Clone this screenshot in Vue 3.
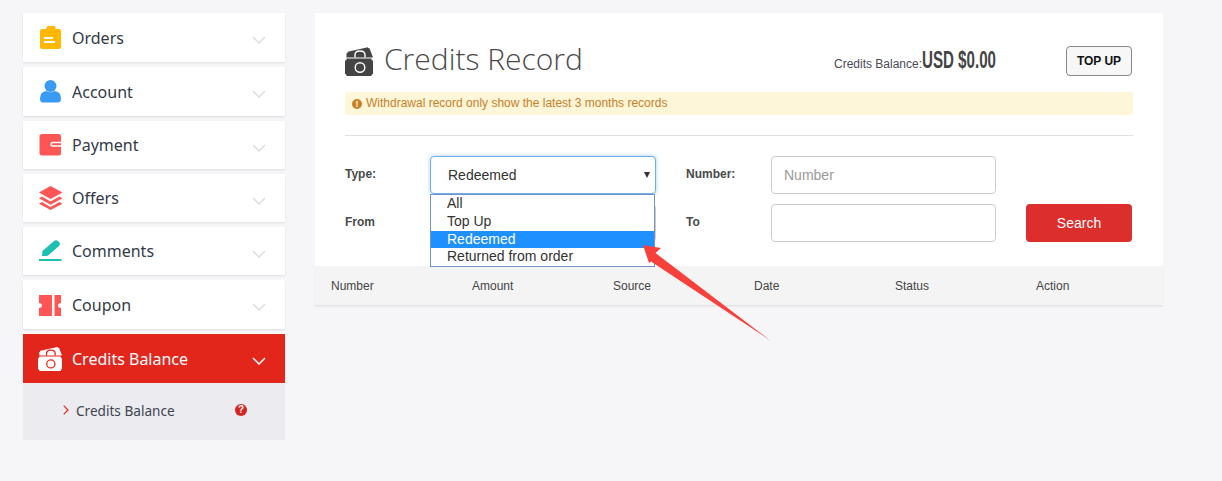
<script setup>
const items = [
  { label: 'Orders', h: 49, icon: 'orders' },
  { label: 'Account', h: 49, icon: 'account' },
  { label: 'Payment', h: 48, icon: 'payment' },
  { label: 'Offers', h: 48, icon: 'offers' },
  { label: 'Comments', h: 48, icon: 'comments' },
  { label: 'Coupon', h: 49, icon: 'coupon' },
]
const cols = ['Number', 'Amount', 'Source', 'Date', 'Status', 'Action']
const options = ['All', 'Top Up', 'Redeemed', 'Returned from order']
</script>

<template>
  <div class="page">
    <aside class="side">
      <div v-for="it in items" :key="it.label" class="item" :style="{ height: it.h + 'px' }">
        <span class="ico">
          <svg v-if="it.icon === 'orders'" width="24" height="24" viewBox="0 0 24 24"><path fill="#ffb800" d="M3 3h4.500V1.500Q7.500 0 9 0h6q1.500 0 1.500 1.500V3H20q2 0 2 2v16q0 2-2 2H3q-2 0-2-2V5q0-2 2-2z"/><rect x="5" y="11" width="9" height="2" fill="#fff"/><rect x="5" y="15" width="11" height="2" fill="#fff"/></svg>
          <svg v-else-if="it.icon === 'account'" width="24" height="24" viewBox="0 0 24 24"><circle cx="11.500" cy="6" r="6" fill="#3a9bf5"/><path fill="#3a9bf5" d="M1 18.500q0-7 6.500-7.500 4 2.500 8 0Q22 11.500 22 18.500q0 4-3 4H4q-3 0-3-4z"/></svg>
          <svg v-else-if="it.icon === 'payment'" width="24" height="24" viewBox="0 0 24 24"><rect x="0.500" y="1" width="21.500" height="21.500" rx="2.500" fill="#ff5555"/><path fill="none" stroke="#fff" stroke-width="1.500" d="M22 9.500h-8q-2 0-2 1.750T14 13h8"/></svg>
          <svg v-else-if="it.icon === 'offers'" width="24" height="24" viewBox="0 0 24 24"><path fill="#ff5555" d="M11.500 0l12 6.500-12 6.500-11.500-6.500z"/><path fill="#ff5555" d="M3 10.500l8.500 5 9-5 3 1.700-12 6.500L0 12.200z"/><path fill="#ff5555" d="M3 16l8.500 5 9-5 3 1.700L11.500 24 0 17.700z"/></svg>
          <svg v-else-if="it.icon === 'comments'" width="24" height="24" viewBox="0 0 24 24"><path fill="#1cbfb0" d="M3 17L3.500 12 15 2Q17 .5 19 2L20.500 3.500Q21.500 5.500 20 7L9 16.500Q8 17 7 17z"/><rect x="0" y="20" width="22.500" height="2" fill="#1cbfb0"/></svg>
          <svg v-else-if="it.icon === 'coupon'" width="24" height="24" viewBox="0 0 24 24"><path fill="#ff5555" d="M0 2h13v21H0v-8q3-.5 3-2.500t-3-2.500z"/><path fill="#ff5555" d="M15.500 2H22v8q-3 .5-3 2.500t3 2.500v8h-6.500z"/></svg>
        </span>
        <span class="lbl">{{ it.label }}</span>
        <svg class="chev" width="14" height="8" viewBox="0 0 14 8"><path fill="none" stroke="#dcdcdf" stroke-width="1.400" d="M1 1l6 6 6-6"/></svg>
      </div>
      <div class="item active">
        <span class="ico">
          <svg class="nav-bal" width="24" height="25" viewBox="0 0 28 30" preserveAspectRatio="none">
            <path fill="#fff" d="M1.500 6L24 1l4 10.500H1.500zM0 12.500h28V30H0z"/>
            <path fill="none" stroke="#e3261c" stroke-width="1.500" d="M10 11.500V9q0-4 5-4t5 4v2.500"/>
            <circle cx="15" cy="21.500" r="4.800" fill="none" stroke="#e3261c" stroke-width="1.500"/>
            <circle cx="1.500" cy="6" r="1.300" fill="#e3261c"/><circle cx="24" cy="1" r="1.300" fill="#e3261c"/>
            <circle cx="0" cy="13" r="1.600" fill="#e3261c"/><circle cx="28" cy="13" r="1.600" fill="#e3261c"/>
            <circle cx="0" cy="29.500" r="1.600" fill="#e3261c"/><circle cx="28" cy="29.500" r="1.600" fill="#e3261c"/>
          </svg>
        </span>
        <span class="lbl white">Credits Balance</span>
        <svg class="chev" width="14" height="8" viewBox="0 0 14 8"><path fill="none" stroke="#fff" stroke-width="1.500" d="M1 1l6 6 6-6"/></svg>
      </div>
      <div class="sub">
        <svg class="subchev" width="6" height="10" viewBox="0 0 6 10"><path fill="none" stroke="#e3261c" stroke-width="1.200" d="M.7.7L5 5 .7 9.300"/></svg>
        <span class="subtxt">Credits Balance</span>
        <span class="qm">?</span>
      </div>
    </aside>

    <main class="main">
      <section class="card">
        <div class="head">
          <svg class="title-ico" width="28" height="30" viewBox="0 0 28 30">
            <path fill="#444" d="M1.500 6L24 1l4 10.500H1.500zM0 12.500h28V30H0z"/>
            <path fill="none" stroke="#fff" stroke-width="1.400" d="M10 11.500V9q0-4 5-4t5 4v2.500"/>
            <circle cx="15" cy="21.500" r="4.800" fill="none" stroke="#fff" stroke-width="1.400"/>
            <circle cx="1.500" cy="6" r="1.300" fill="#fff"/><circle cx="24" cy="1" r="1.300" fill="#fff"/>
            <circle cx="0" cy="13" r="1.600" fill="#fff"/><circle cx="28" cy="13" r="1.600" fill="#fff"/>
            <circle cx="0" cy="29.500" r="1.600" fill="#fff"/><circle cx="28" cy="29.500" r="1.600" fill="#fff"/>
          </svg>
          <h1 class="title">Credits Record</h1>
          <div class="bal">
            <span class="bal-l">Credits Balance:</span><span class="bal-v"><span class="bal-n">USD $0.00</span></span>
          </div>
          <button class="top">TOP UP</button>
        </div>
        <div class="alert"><span class="excl">!</span>Withdrawal record only show the latest 3 months records</div>
        <div class="rule"></div>
        <div class="row">
          <label class="fl">Type:</label>
          <div class="sel">Redeemed<span class="caret"></span>
            <ul class="drop">
              <li v-for="o in options" :key="o" :class="{ hi: o === 'Redeemed' }">{{ o }}</li>
            </ul>
          </div>
          <label class="fl second">Number:</label>
          <div class="inp ph">Number</div>
        </div>
        <div class="row r2">
          <label class="fl">From</label>
          <div class="inp first"></div>
          <label class="fl second">To</label>
          <div class="inp"></div>
          <button class="search">Search</button>
        </div>
      </section>
      <div class="thead">
        <span v-for="c in cols" :key="c" class="th">{{ c }}</span>
      </div>
    </main>

    <svg class="arrow" width="140" height="105" viewBox="640 240 140 105">
      <path fill="#f9413c" d="M643 245L661 248 655.500 253 771 341 651 261.500 649 263z"/>
    </svg>
  </div>
</template>

<style>
html, body { margin: 0; background: #f6f6f9; }
</style>

<style scoped>
.page { position: relative; width: 1222px; height: 481px; overflow: hidden; display: flex; align-items: flex-start; gap: 30px; padding: 13px 0 0 23px; box-sizing: border-box; background: #f6f6f9; font-family: "Liberation Sans", Arial, sans-serif; }
.side { width: 262px; display: flex; flex-direction: column; gap: 5px; }
.item { height: 49px; background: #fff; box-shadow: 0 1px 2px rgba(0,0,0,.1); display: flex; align-items: center; position: relative; }
.ico { width: 49px; flex: none; display: flex; justify-content: flex-start; padding-left: 16px; box-sizing: border-box; }
.nav-bal { margin-left: -1px; margin-right: 1px; }
.lbl { font: 16px "Noto Sans", sans-serif; color: #333a47; }
.white { color: #fff; }
.chev { position: absolute; right: 19px; top: 23px; }
.active { background: #e3261c; box-shadow: none; margin-bottom: -5px; }
.sub { height: 57px; background: #ecebef; display: flex; align-items: center; position: relative; padding-left: 40px; }
.subchev { margin-top: -3px; }
.subtxt { margin-left: 7px; margin-top: -2px; font: 13.600px "Noto Sans", sans-serif; color: #3d4450; }
.qm { position: absolute; left: 212px; top: 21px; width: 12px; height: 12px; border-radius: 50%; background: #d9231f; color: #fff; font: bold 10px/12px "Liberation Sans", sans-serif; text-align: center; }
.main { width: 848px; }
.card { background: #fff; height: 253px; padding: 0 30px; box-sizing: border-box; }
.head { display: flex; align-items: center; height: 79px; padding-top: 14px; box-sizing: border-box; }
.title-ico { flex: none; margin-top: 2px; }
.title { margin: -3px 0 0 11px; font: 300 30px "Open Sans", sans-serif; color: #4a4a4a; white-space: nowrap; flex: 1; }
.bal { width: 232px; display: flex; align-items: baseline; white-space: nowrap; }
.bal-l { font-size: 12px; color: #4a4a55; margin-top: 8px; }
.bal-v { display: inline-block; width: 75px; font: bold 24px "Liberation Sans", sans-serif; color: #444; }
.bal-n { display: inline-block; transform: scaleX(.63); transform-origin: left center; }
.top { width: 66px; height: 30px; margin-top: 2px; margin-right: 1px; padding: 0; background: #f7f7f7; border: 1px solid #888; border-radius: 4px; font: bold 12px "Liberation Sans", sans-serif; color: #111; }
.alert { height: 23px; background: #fdf6d8; border-radius: 3px; color: #c9802a; font-size: 12px; line-height: 23px; padding-left: 7px; display: flex; align-items: center; }
.excl { width: 10px; height: 10px; border-radius: 50%; background: #c9802a; color: #fdf6d8; font: bold 9px/10px "Liberation Sans", sans-serif; text-align: center; margin-right: 4px; }
.rule { height: 1px; background: #e0e0e0; margin: 20px 0; }
.row { display: flex; align-items: flex-start; height: 38px; }
.r2 { margin-top: 10px; }
.fl { width: 85px; flex: none; font-size: 12px; font-weight: bold; color: #4a4a4a; line-height: 36px; }
.second { margin-left: 30px; }
.sel, .inp { box-sizing: border-box; height: 38px; border-radius: 4px; background: #fff; font-size: 14px; line-height: 36px; }
.sel { width: 226px; border: 1px solid #6eaef0; box-shadow: 0 0 4px rgba(102,175,233,.6); padding-left: 17px; color: #333; position: relative; z-index: 2; }
.inp { width: 225px; border: 1px solid #ccc; padding-left: 12px; color: #999; }
.first { width: 226px; }
.caret { position: absolute; right: 5px; top: 15px; border-left: 3px solid transparent; border-right: 3px solid transparent; border-top: 6px solid #333; }
.drop { position: absolute; left: -1px; top: 37px; width: 225px; box-sizing: border-box; margin: 0; padding: 0; list-style: none; background: #fff; border: 1px solid #7393c9; font-size: 14px; line-height: 17.750px; }
.drop li { padding-left: 16px; height: 17.750px; color: #333; }
.drop .hi { background: #1e90ff; color: #fff; }
.search { width: 106px; height: 38px; margin-left: 30px; padding: 0; border: 0; border-radius: 4px; background: #dc2e2c; color: #fff; font: 14px "Liberation Sans", sans-serif; }
.thead { height: 40px; background: #f4f4f4; border-bottom: 1px solid #e3e3e3; box-shadow: 0 1px 2px rgba(0,0,0,.05); display: flex; box-sizing: border-box; }
.th { width: 141px; box-sizing: border-box; padding-left: 16px; font-size: 12px; line-height: 40px; color: #444; }
.arrow { position: absolute; left: 640px; top: 240px; z-index: 5; }
</style>
